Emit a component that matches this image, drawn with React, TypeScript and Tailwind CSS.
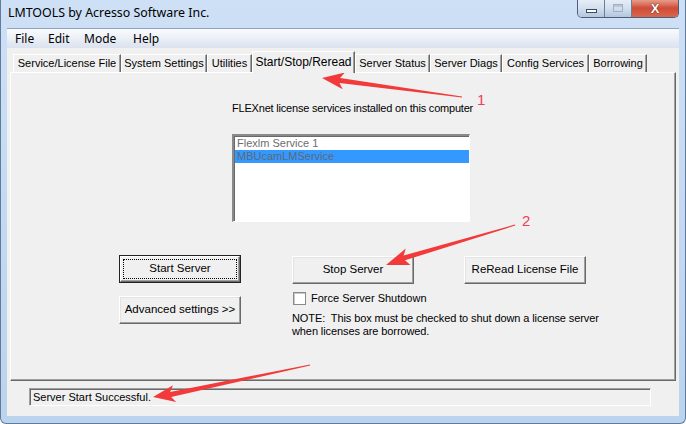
import React from "react";

const ui = "font-['Liberation_Sans',Arial,sans-serif]";
const seg = "font-['Noto_Sans','Open_Sans',sans-serif]";

const tabs = [
  { label: "Service/License File", w: "w-[108px]" },
  { label: "System Settings", w: "w-[86px]" },
  { label: "Utilities", w: "w-[45px]" },
  { label: "Start/Stop/Reread", w: "w-[103px]", active: true },
  { label: "Server Status", w: "w-[75px]" },
  { label: "Server Diags", w: "w-[72px]" },
  { label: "Config Services", w: "w-[87px]" },
  { label: "Borrowing", w: "w-[58px]" },
];

function Button({ label, isDefault }: { label: string; isDefault?: boolean }) {
  if (isDefault) {
    return (
      <div className="w-[122px] h-[28px] border border-[#222]">
        <div className="h-full bg-[#f0f0f0] border-t border-l border-white border-r border-b border-r-[#696969] border-b-[#696969] shadow-[inset_-1px_-1px_0_#a0a0a0] p-[2px]">
          <div className="h-full border border-dotted border-black flex items-center justify-center text-[11.5px] leading-none">
            {label}
          </div>
        </div>
      </div>
    );
  }
  return (
    <div className="w-[122px] h-[28px] bg-[#f0f0f0] border-t border-l border-white border-r border-b border-r-[#696969] border-b-[#696969] shadow-[inset_-1px_-1px_0_#a0a0a0,inset_1px_1px_0_#e3e3e3] flex items-center justify-center text-[11.5px] leading-none whitespace-nowrap">
      {label}
    </div>
  );
}

function Arrows() {
  return (
    <svg className="absolute inset-0 pointer-events-none" width="686" height="424" viewBox="0 0 686 424">
      <rect x="260" y="68.5" width="91" height="2" fill="#f23a3a" />
      <polygon
        fill="#f23a3a"
        points="322,78 344.9,72.5 340.1,77.9 462,96.4 462,97.6 339.5,82.9 342.7,89.3"
      />
      <polygon
        fill="#f23a3a"
        points="386,265 405.8,248.5 403.6,255.5 515,224.5 515.3,225.5 405,260.3 410.4,265"
      />
      <polygon
        fill="#f23a3a"
        points="153,397 173,385.3 170.1,392 310,364.5 310.2,365.5 171.1,396.9 176.2,401.9"
      />
    </svg>
  );
}

export default function App() {
  return (
    <div className={`relative w-[686px] h-[424px] overflow-hidden bg-white ${ui}`}>
      <div className="h-full flex flex-col bg-gradient-to-b from-[#cde0f6] to-[#bcd3ed] border-l border-r border-b border-[#5f7c9e] rounded-b-[6px]">
        {/* title bar */}
        <div className="h-[28px] flex items-start">
          <span className={`ml-[7px] mt-[5px] text-[12.4px] leading-[16px] text-black ${seg}`}>
            LMTOOLS by Acresso Software Inc.
          </span>
          <div className="ml-auto mr-[6px] -mt-px flex h-[19px] border border-t-0 border-[#4c5e78] rounded-b-[5px] overflow-hidden">
            <div className="w-[27px] flex items-center justify-center bg-gradient-to-b from-[#e8eff8] via-[#d4e0ef] to-[#b3c6dd] border-r border-[#6b7f99]">
              <div className="w-[11px] h-[4px] bg-white border border-[#3c4b60] mt-[5px]" />
            </div>
            <div className="w-[27px] flex items-center justify-center bg-gradient-to-b from-[#e8eff8] via-[#d4e0ef] to-[#b3c6dd] border-r border-[#6b7f99]">
              <div className="w-[10px] h-[8px] border border-[#9fb0c6] shadow-[inset_0_2px_0_#b8c6d8]" />
            </div>
            <div className="w-[46px] flex items-center justify-center bg-gradient-to-b from-[#e8a595] via-[#cf4b38] to-[#d9674f]">
              <span className="text-white font-bold text-[13px] leading-none [text-shadow:0_0_1px_#5a1a10,0_0_1px_#5a1a10]">X</span>
            </div>
          </div>
        </div>

        {/* client area */}
        <div className="mx-[6px] h-[388px] bg-[#f0f0f0] border-t border-[#8da3be] flex flex-col">
          <div className={`h-[19px] flex items-center pl-[1px] text-[12px] text-black bg-gradient-to-b from-[#fafbfd] to-[#dbe2ef] ${seg}`}>
            <span className="w-[33px] pl-[7px]">File</span>
            <span className="w-[36px] pl-[7px]">Edit</span>
            <span className="w-[49px] pl-[7px]">Mode</span>
            <span className="pl-[7px]">Help</span>
          </div>

          <div className="mt-[3px] h-[21px] flex items-end pl-[6px] text-[11px] leading-[13px] whitespace-nowrap">
            {tabs.map((t) =>
              t.active ? (
                <div
                  key={t.label}
                  className={`${t.w} h-[22px] -mb-px relative z-10 bg-[#f0f0f0] border-t border-l border-white border-r border-r-[#696969] shadow-[inset_-1px_0_0_#a0a0a0] flex items-start justify-center pt-[4px] text-[12px]`}
                >
                  {t.label}
                </div>
              ) : (
                <div
                  key={t.label}
                  className={`${t.w} h-[18px] bg-[#f0f0f0] border-t border-l border-white border-r border-r-[#696969] shadow-[inset_-1px_0_0_#a0a0a0] flex items-center justify-center`}
                >
                  {t.label}
                </div>
              )
            )}
          </div>

          <div className="mx-[3px] h-[309px] border-t border-l border-white border-r border-b border-r-[#696969] border-b-[#696969] shadow-[inset_-1px_-1px_0_#a0a0a0] text-[11px] leading-[13px] text-black">
            <div className="ml-[221px] pt-[29px] whitespace-nowrap tracking-[-0.2px]">
              FLEXnet license services installed on this computer
            </div>
            <div className="ml-[221px] mt-[19px] w-[238px] h-[88px] bg-white border-t-2 border-l-2 border-t-[#8a8a8a] border-l-[#8a8a8a] border-b border-r border-white shadow-[inset_1px_1px_0_#696969] pt-[1px] pl-[1px] text-[#6d6d6d]">
              <div className="h-[13px] pl-[2px]">Flexlm Service 1</div>
              <div className="h-[13px] pl-[2px] bg-[#3399ff] text-[#5d6a7a]">MBUcamLMService</div>
            </div>

            <div className="mt-[33px] pl-[108px] flex items-start">
              <div className="w-[122px] flex flex-col gap-[13px]">
                <Button label="Start Server" isDefault />
                <Button label="Advanced settings >>" />
              </div>
              <div className="ml-[51px] mt-px flex flex-col">
                <div className="flex gap-[50px]">
                  <Button label="Stop Server" />
                  <Button label="ReRead License File" />
                </div>
                <div className="mt-[8px] ml-px flex items-center h-[13px]">
                  <div className="w-[13px] h-[13px] bg-white border border-[#8a8a8a] shadow-[inset_1px_1px_0_#c8c8c8]" />
                  <span className="ml-[5px] text-[11px]">Force Server Shutdown</span>
                </div>
                <div className="mt-[7px] whitespace-pre tracking-[-0.1px]">
                  {"NOTE:  This box must be checked to shut down a license server\nwhen licenses are borrowed."}
                </div>
              </div>
            </div>
          </div>

          <div className="mt-[7px] ml-[22px] w-[622px] h-[18px] border-t border-l border-[#a0a0a0] border-b border-r border-b-white border-r-white shadow-[inset_1px_1px_0_#696969] flex items-center pl-[3px] text-[11px] leading-none">
            Server Start Successful.
          </div>
        </div>
      </div>

      <Arrows />
      <span className="absolute left-[477px] top-[92px] text-[15px] leading-[16px] text-[#f03c5a]">1</span>
      <span className="absolute left-[522px] top-[213px] text-[15px] leading-[16px] text-[#f03c5a]">2</span>
    </div>
  );
}
